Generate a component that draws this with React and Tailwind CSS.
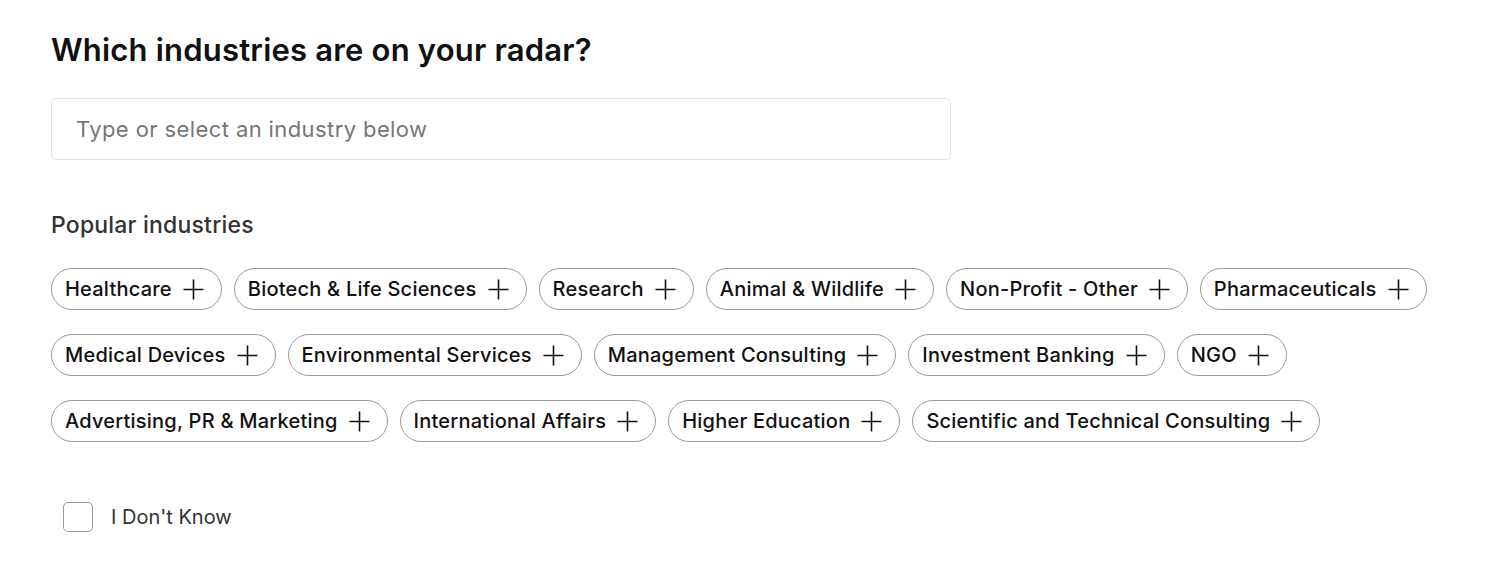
import React from "react";

const rows = [
  ["Healthcare", "Biotech & Life Sciences", "Research", "Animal & Wildlife", "Non-Profit - Other", "Pharmaceuticals"],
  ["Medical Devices", "Environmental Services", "Management Consulting", "Investment Banking", "NGO"],
  ["Advertising, PR & Marketing", "International Affairs", "Higher Education", "Scientific and Technical Consulting"],
];

function Plus() {
  return (
    <svg width="21" height="21" viewBox="0 0 21 21" fill="none" stroke="#111" strokeWidth="1.6" className="shrink-0">
      <path d="M10.5 0.5v20M0.5 10.5h20" />
    </svg>
  );
}

function Chip({ label }) {
  return (
    <button className="flex items-center gap-[11px] h-[42px] pl-[13px] pr-[17px] rounded-full border border-[#9a9a9a] bg-white text-[20px] font-medium text-[#111] leading-none tracking-[0.22px]">
      <span>{label}</span>
      <Plus />
    </button>
  );
}

export default function App() {
  return (
    <div className="min-h-[584px] w-full bg-white pl-[51px] pt-[28px]" style={{ fontFamily: "Inter, 'Liberation Sans', sans-serif" }}>
      <h1 className="text-[31px] leading-[44px] font-semibold text-[#111] tracking-[0.2px]">Which industries are on your radar?</h1>
      <div className="mt-[26px] w-[900px] h-[62px] rounded-[5px] border border-[#e2e2e2] flex items-center px-[24px]">
        <input
          className="w-full outline-none text-[22px] tracking-[0.4px] text-[#333] placeholder-[#777] bg-transparent"
          placeholder="Type or select an industry below"
        />
      </div>
      <div className="mt-[50px] text-[23px] leading-[30px] font-medium text-[#333] tracking-[0.2px]">Popular industries</div>
      <div className="mt-[28px] flex flex-col gap-[24px]">
        {rows.map((row, i) => (
          <div key={i} className="flex gap-[12px]">
            {row.map((l) => (
              <Chip key={l} label={l} />
            ))}
          </div>
        ))}
      </div>
      <label className="mt-[60px] ml-[12px] flex items-center gap-[18px]">
        <span className="w-[30px] h-[30px] rounded-[5px] border border-[#999] bg-white" />
        <span className="text-[20px] text-[#333]">I Don't Know</span>
      </label>
    </div>
  );
}
